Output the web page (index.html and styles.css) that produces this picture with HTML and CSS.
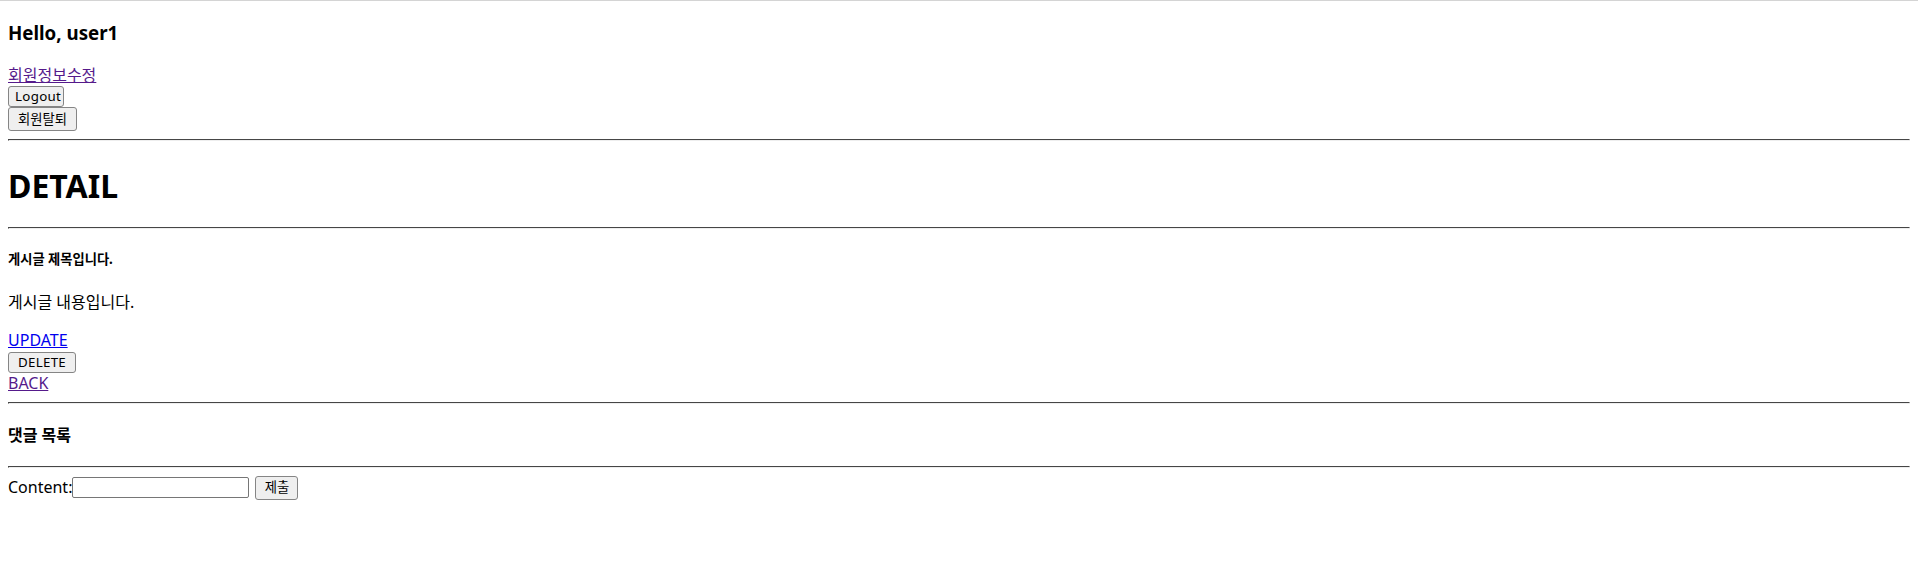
FILE: index.html
```html
<!DOCTYPE html>
<html>
<head>
<meta charset="utf-8">
<title>Detail</title>
<link rel="stylesheet" href="styles.css">
</head>
<body>
<h3 class="hello">Hello, user1</h3>
<div class="line line-ko"><a class="visited" href="#">회원정보수정</a></div>
<form class="f"><button type="button" class="btn btn-logout">Logout</button></form>
<form class="f"><button type="button" class="btn btn-ko">회원탈퇴</button></form>
<hr>
<h1 class="title">DETAIL</h1>
<hr>
<h5 class="sub">게시글 제목입니다.</h5>
<p class="content">게시글 내용입니다.</p>
<div class="line"><a class="link" href="#">UPDATE</a></div>
<form class="f"><button type="button" class="btn btn-delete">DELETE</button></form>
<div class="line"><a class="visited" href="#">BACK</a></div>
<hr>
<h4 class="sub4">댓글 목록</h4>
<hr>
<form class="f row"><span class="label">Content:</span><input class="inp" type="text"><button type="button" class="btn btn-submit">제출</button></form>
</body>
</html>
```
FILE: styles.css
```css
html { border-top: 1px solid #d4d4d4; margin: 0; padding: 0; }
body { margin: 0 8px 8px; padding: 0; font-family: "Noto Sans", "Noto Sans CJK KR", sans-serif; font-size: 16px; line-height: 21.3px; color: #000; }
.hello { font-size: 18.72px; line-height: 25px; margin: 19px 0; }
.title { font-size: 32px; line-height: 42.6px; margin: 24px 0 19px; }
.sub { font-size: 13.28px; line-height: 17.7px; margin: 22px 0; }
.content { line-height: 24px; margin: 16px 0; }
.sub4 { font-size: 16px; line-height: 20px; margin: 21px 0; }
.line { line-height: 21.3px; }
.line-ko { line-height: 22px; }
a.link { color: #0000ee; }
a.visited { color: #551a8b; }
.f { margin: 0; display: flex; align-items: center; }
.btn { box-sizing: border-box; font-family: "Noto Sans", "Noto Sans CJK KR", sans-serif; font-size: 13.33px; font-weight: 400; line-height: 17px; height: 21px; padding: 0 6px; border: 1px solid #858585; border-radius: 3px; background: #efefef; color: #000; letter-spacing: 0.3px; }
.btn-logout { width: 56px; }
.btn-delete { width: 68px; }
.btn-ko { height: 24px; width: 69px; letter-spacing: 0; }
.btn-submit { height: 24px; width: 43px; margin-left: 6px; letter-spacing: 0; }
.row { height: 24px; }
.label { font-size: 16px; }
.inp { box-sizing: border-box; width: 177px; height: 21px; font-family: "Noto Sans", sans-serif; font-size: 13.33px; padding: 1px 2px; border: 1px solid #767676; border-radius: 2px; margin: 0; }
hr { border: 1px inset #eee; border-color: #9a9a9a #eee #eee #9a9a9a; margin: 8px 0; }
```
